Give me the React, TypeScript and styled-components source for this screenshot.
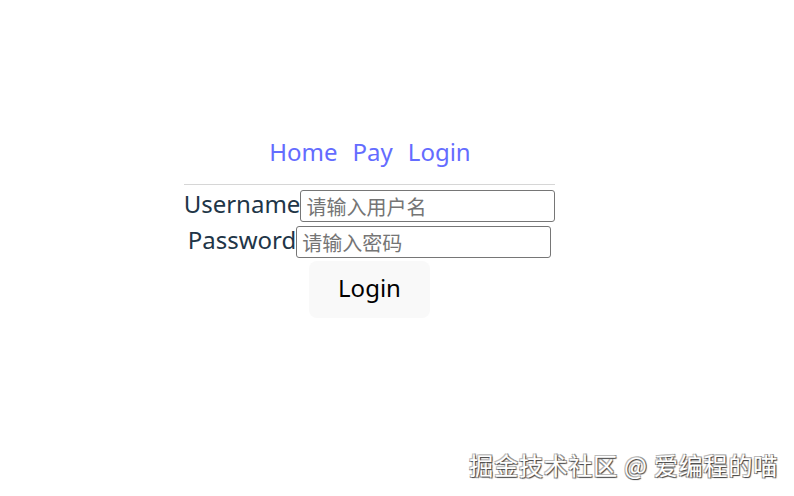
import React from "react";
import styled, { createGlobalStyle } from "styled-components";

const Global = createGlobalStyle`
  html, body { margin: 0; padding: 0; background: #ffffff; }
  body { font-family: "Noto Sans", "Noto Sans CJK SC", sans-serif; color: #213547; }
`;

const Page = styled.div`
  position: relative;
  width: 794px;
  height: 496px;
  overflow: hidden;
  padding-top: 133px;
  box-sizing: border-box;
`;

const Container = styled.div`
  width: 371px;
  margin-left: 184px;
  display: flex;
  flex-direction: column;
  align-items: center;
`;

const Nav = styled.nav`
  display: flex;
  gap: 15px;
  font-size: 24px;
  line-height: 38px;
  margin-left: 1px;
`;

const NavLink = styled.a`
  color: #646cff;
  text-decoration: none;
  font-weight: 400;
`;

const Rule = styled.hr`
  width: 100%;
  margin: 13px 0 3px;
  border: none;
  border-top: 1px solid #d6d6d6;
`;

const Row = styled.div`
  display: flex;
  align-items: center;
  height: 36px;
`;

const Label = styled.label`
  font-size: 24px;
  line-height: 30px;
  padding-bottom: 5px;
  color: #213547;
`;

const Input = styled.input`
  width: 255px;
  height: 32px;
  box-sizing: border-box;
  border: 1px solid #767676;
  border-radius: 3px;
  padding: 0 5px;
  font-family: "Noto Sans CJK SC", "Noto Sans", sans-serif;
  font-size: 20px;
  color: #213547;
  &::placeholder { color: #757575; }
`;

const Button = styled.button`
  margin-top: 1px;
  width: 121px;
  height: 57px;
  border: none;
  border-radius: 8px;
  background: #f9f9f9;
  font-family: "Noto Sans", sans-serif;
  font-size: 24px;
  line-height: 30px;
  padding: 0 0 3px;
  color: #000000;
  cursor: pointer;
`;

const Watermark = styled.div`
  position: absolute;
  right: 16px;
  bottom: 16px;
  font-family: "Noto Sans CJK SC", sans-serif;
  font-size: 24px;
  line-height: 30px;
  color: #ffffff;
  text-shadow: 1px 1px 1px #444, -1px -1px 0 #bbb, 1px -1px 0 #999, -1px 1px 0 #999;
  letter-spacing: 0.8px;
`;

export default function App() {
  return (
    <>
      <Global />
      <Page>
        <Container>
          <Nav>
            <NavLink href="#">Home</NavLink>
            <NavLink href="#">Pay</NavLink>
            <NavLink href="#">Login</NavLink>
          </Nav>
          <Rule />
          <Row>
            <Label>Username</Label>
            <Input placeholder="请输入用户名" />
          </Row>
          <Row>
            <Label>Password</Label>
            <Input placeholder="请输入密码" />
          </Row>
          <Button>Login</Button>
        </Container>
        <Watermark>掘金技术社区 @ 爱编程的喵</Watermark>
      </Page>
    </>
  );
}
